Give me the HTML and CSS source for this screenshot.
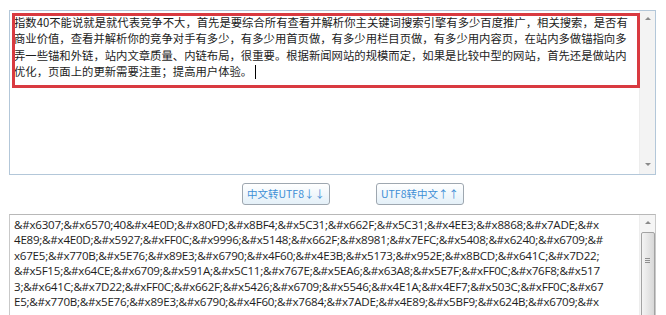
FILE: index.html
```html
<!DOCTYPE html>
<html lang="zh-CN">
<head>
<meta charset="utf-8">
<title>中文转UTF8</title>
<link rel="stylesheet" href="styles.css">
</head>
<body>
<div class="page">
  <div class="box box-input">
    <div class="content cn">
      <div class="line">指数40不能说就是就代表竞争不大，首先是要综合所有查看并解析你主关键词搜索引擎有多少百度推广，相关搜索，是否有</div>
      <div class="line">商业价值，查看并解析你的竞争对手有多少，有多少用首页做，有多少用栏目页做，有多少用内容页，在站内多做锚指向多</div>
      <div class="line">弄一些锚和外链，站内文章质量、内链布局，很重要。根据新闻网站的规模而定，如果是比较中型的网站，首先还是做站内</div>
      <div class="line">优化，页面上的更新需要注重；提高用户体验。<span class="caret"></span></div>
    </div>
    <div class="scrollbar">
      <span class="arrow up"></span>
      <span class="arrow down"></span>
    </div>
    <div class="highlight"></div>
  </div>
  <div class="actions">
    <button class="btn" type="button">中文转UTF8↓↓</button>
    <button class="btn" type="button">UTF8转中文↑↑</button>
  </div>
  <div class="box box-output">
    <div class="content code">
      <div class="line">&amp;#x6307;&amp;#x6570;40&amp;#x4E0D;&amp;#x80FD;&amp;#x8BF4;&amp;#x5C31;&amp;#x662F;&amp;#x5C31;&amp;#x4EE3;&amp;#x8868;&amp;#x7ADE;&amp;#x</div>
      <div class="line">4E89;&amp;#x4E0D;&amp;#x5927;&amp;#xFF0C;&amp;#x9996;&amp;#x5148;&amp;#x662F;&amp;#x8981;&amp;#x7EFC;&amp;#x5408;&amp;#x6240;&amp;#x6709;&amp;#</div>
      <div class="line">x67E5;&amp;#x770B;&amp;#x5E76;&amp;#x89E3;&amp;#x6790;&amp;#x4F60;&amp;#x4E3B;&amp;#x5173;&amp;#x952E;&amp;#x8BCD;&amp;#x641C;&amp;#x7D22;</div>
      <div class="line">&amp;#x5F15;&amp;#x64CE;&amp;#x6709;&amp;#x591A;&amp;#x5C11;&amp;#x767E;&amp;#x5EA6;&amp;#x63A8;&amp;#x5E7F;&amp;#xFF0C;&amp;#x76F8;&amp;#x517</div>
      <div class="line">3;&amp;#x641C;&amp;#x7D22;&amp;#xFF0C;&amp;#x662F;&amp;#x5426;&amp;#x6709;&amp;#x5546;&amp;#x4E1A;&amp;#x4EF7;&amp;#x503C;&amp;#xFF0C;&amp;#x67</div>
      <div class="line">E5;&amp;#x770B;&amp;#x5E76;&amp;#x89E3;&amp;#x6790;&amp;#x4F60;&amp;#x7684;&amp;#x7ADE;&amp;#x4E89;&amp;#x5BF9;&amp;#x624B;&amp;#x6709;&amp;#x</div>
    </div>
    <div class="scrollbar active">
      <span class="arrow up"></span>
      <span class="thumb"><span class="grip"></span></span>
    </div>
  </div>
</div>
</body>
</html>
```

FILE: styles.css
```css
html, body {
  margin: 0;
  background: #ffffff;
}

body {
  height: 315px;
  overflow: hidden;
}

.page {
  padding: 10px 0 0 9px;
  width: 647px;
}

.box {
  position: relative;
  display: flex;
  border: 1px solid #b3c7d9;
  background: #ffffff;
}

.box-input {
  height: 163px;
}

.box-output {
  margin-top: 9px;
  height: 130px;
  border-color: #b8b8b8 #c9c9c9 #c9c9c9 #c9c9c9;
}

.content {
  flex: 1;
  min-width: 0;
  overflow: hidden;
}

.cn {
  padding: 3px 0 0 4px;
  font-family: "Noto Sans CJK SC", "Noto Sans", sans-serif;
  font-size: 11.35px;
  line-height: 16.3px;
  color: #1c1c1c;
}

.code {
  padding: 2px 0 0 4px;
  font-family: "Open Sans", "Noto Sans", sans-serif;
  font-size: 11.6px;
  letter-spacing: -0.25px;
  line-height: 15.4px;
  color: #1e1e1e;
}

.line {
  white-space: nowrap;
}

.caret {
  display: inline-block;
  width: 1px;
  height: 14px;
  margin-left: 3px;
  background: #000000;
  vertical-align: -3px;
}

.scrollbar {
  flex: none;
  width: 16px;
  display: flex;
  flex-direction: column;
  align-items: center;
  justify-content: space-between;
  background: #f3f3f3;
  border-left: 1px solid #ededed;
  padding: 6px 0 8px;
  box-sizing: border-box;
}

.scrollbar.active {
  justify-content: flex-start;
  padding: 6px 0 0;
  background: #f5f5f5;
}

.arrow {
  width: 0;
  height: 0;
  border-left: 3px solid transparent;
  border-right: 3px solid transparent;
}

.arrow.up {
  border-bottom: 3px solid #8a8a8a;
}

.arrow.down {
  border-top: 3px solid #8a8a8a;
}

.thumb {
  margin-top: 8px;
  width: 14px;
  height: 120px;
  box-sizing: border-box;
  border: 1px solid #a3a3a3;
  border-radius: 2px;
  background: linear-gradient(to right, #f4f4f4, #e6e6e6 50%, #d8d8d8);
  display: flex;
  justify-content: center;
  padding-top: 25px;
}

.grip {
  width: 5px;
  height: 5px;
  border-top: 1px solid #8f8f8f;
  border-bottom: 1px solid #8f8f8f;
  box-sizing: border-box;
  position: relative;
}

.grip::after {
  content: "";
  position: absolute;
  left: 0;
  right: 0;
  top: 1px;
  border-top: 1px solid #8f8f8f;
}

.highlight {
  position: absolute;
  left: 2px;
  top: 2px;
  width: 628px;
  height: 75px;
  box-sizing: border-box;
  border: 3px solid #d93a40;
  pointer-events: none;
}

.actions {
  display: flex;
  gap: 46px;
  margin-top: 8px;
  padding-left: 233px;
}

.btn {
  width: 88px;
  height: 22px;
  margin: 0;
  padding: 0;
  border: 1px solid #9ea7b0;
  border-radius: 3px;
  background: linear-gradient(#ffffff, #e4f0f8);
  color: #3f8fd6;
  font-family: "Noto Sans CJK SC", "Noto Sans", sans-serif;
  font-size: 10.5px;
  line-height: 20px;
  text-align: center;
}
```
